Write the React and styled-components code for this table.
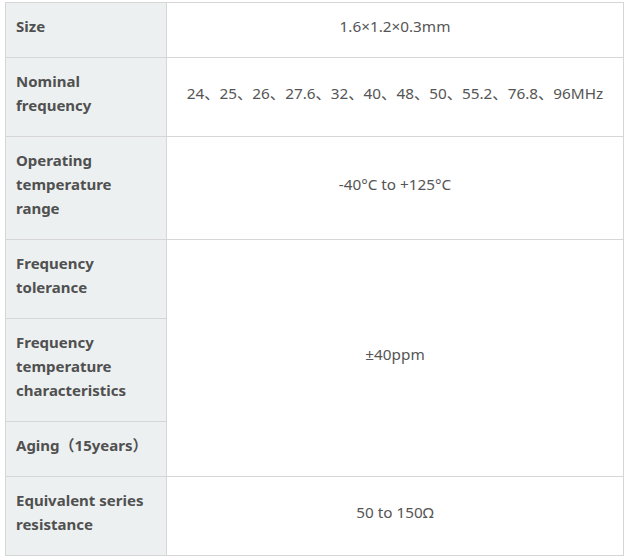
import React from "react";
import styled, { createGlobalStyle } from "styled-components";

const GlobalStyle = createGlobalStyle`
  body {
    margin: 0;
    padding: 2px 5px;
    background: #fff;
    font-family: "Noto Sans", "Noto Sans CJK SC", sans-serif;
  }
`;

const Table = styled.table`
  width: 619px;
  border-collapse: collapse;
  table-layout: fixed;
  color: #555;
  font-size: 15px;
  line-height: 24px;
`;

// text in the reference sits a few pixels above the cell's centre
const LabelCell = styled.th`
  width: 161px;
  padding: 11px 10px 19px;
  background: #ecf0f1;
  border: 1px solid #d6d6d6;
  color: #505050;
  font-weight: 700;
  text-align: left;
  vertical-align: middle;
`;

const ValueCell = styled.td`
  padding: 11px 10px 19px;
  border: 1px solid #d6d6d6;
  font-size: 15.3px;
  text-align: center;
  vertical-align: middle;
`;

const specs = [
  { label: "Size", value: "1.6×1.2×0.3mm" },
  { label: "Nominal frequency", value: "24、25、26、27.6、32、40、48、50、55.2、76.8、96MHz" },
  { label: "Operating temperature range", value: "-40°C to +125°C" },
  { label: "Frequency tolerance", value: "±40ppm", span: 3 },
  { label: "Frequency temperature characteristics", skip: true },
  { label: "Aging（15years）", skip: true },
  { label: "Equivalent series resistance", value: "50 to 150Ω" },
];

const App = () => {
  return (
    <>
      <GlobalStyle />
      <Table>
        <colgroup>
          <col style={{ width: 161 }} />
          <col />
        </colgroup>
        <tbody>
          {specs.map((row, index) => (
            <tr key={index}>
              <LabelCell>{row.label}</LabelCell>
              {row.skip ? null : <ValueCell rowSpan={row.span || 1}>{row.value}</ValueCell>}
            </tr>
          ))}
        </tbody>
      </Table>
    </>
  );
};

export default App;
